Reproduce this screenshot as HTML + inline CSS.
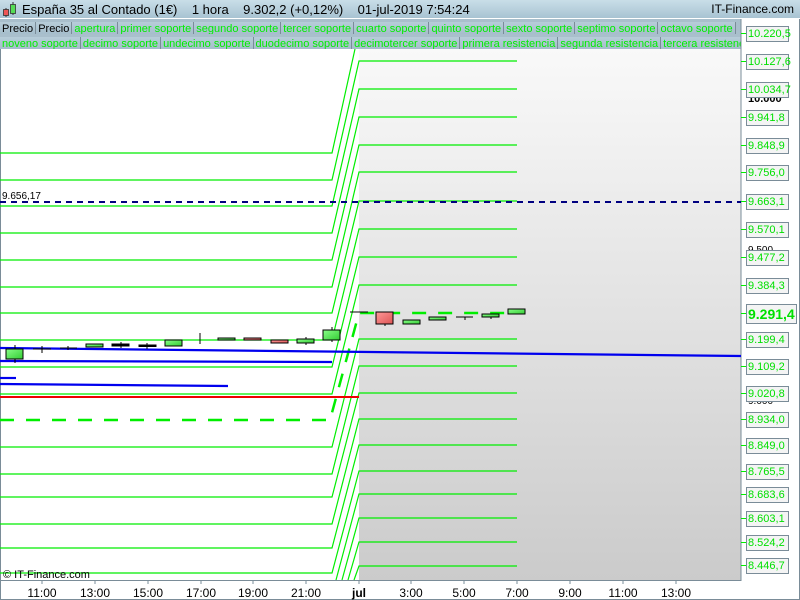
<!DOCTYPE html>
<html><head><meta charset="utf-8"><style>
body{margin:0;width:800px;height:600px;overflow:hidden;background:#fff;font-family:"Liberation Sans",sans-serif;}
.bar{position:absolute;left:0;width:800px;background:linear-gradient(#c9dee8,#a8c3d2);}
.row{position:absolute;left:0;height:15px;width:741px;background:#a9bfcc;overflow:hidden;white-space:nowrap}
.row span{display:inline-block;height:14px;line-height:14px;font-size:11px;color:#00ee00;padding:0 2px;border-right:1px solid #7a8c98;border-bottom:1px solid #7a8c98;background:linear-gradient(#b7cdd9,#a3bbc9)}
.row span.b{color:#000}
</style></head><body>
<div class="bar" style="top:0;height:18px;"></div>
<svg style="position:absolute;left:2px;top:1px" width="16" height="17"><line x1="4" y1="7" x2="4" y2="16" stroke="#333"/><rect x="1.5" y="8.5" width="5" height="6" fill="#e55" stroke="#333" stroke-width=".8"/><line x1="11" y1="1" x2="11" y2="14" stroke="#333"/><rect x="8.5" y="3.5" width="5" height="9" fill="#5d5" stroke="#333" stroke-width=".8"/></svg>
<div style="position:absolute;left:22px;top:2px;font-size:13px;color:#000;white-space:pre">España 35 al Contado (1€)    1 hora    9.302,2 (+0,12%)    01-jul-2019 7:54:24</div>
<div style="position:absolute;right:6px;top:2px;font-size:12px;color:#000">IT-Finance.com</div>
<div class="row" style="top:19px"><span class="b">Precio</span><span class="b">Precio</span><span>apertura</span><span>primer soporte</span><span>segundo soporte</span><span>tercer soporte</span><span>cuarto soporte</span><span>quinto soporte</span><span>sexto soporte</span><span>septimo soporte</span><span>octavo soporte</span></div>
<div class="row" style="top:34px;height:15px"><span>noveno soporte</span><span>decimo soporte</span><span>undecimo soporte</span><span>duodecimo soporte</span><span>decimotercer soporte</span><span>primera resistencia</span><span>segunda resistencia</span><span>tercera resistencia</span></div>
<div style="position:absolute;left:741px;top:19px;width:59px;height:30px;background:#fff"></div>
<svg style="position:absolute;left:0;top:0" width="800" height="600">
<defs><linearGradient id="g" x1="0" y1="0" x2="0" y2="1"><stop offset="0" stop-color="#f9f9f9"/><stop offset="1" stop-color="#cbcbcb"/></linearGradient>
<linearGradient id="cg" x1="0" y1="0" x2="1" y2="1"><stop offset="0" stop-color="#8f8"/><stop offset="1" stop-color="#3c3"/></linearGradient>
<linearGradient id="cr" x1="0" y1="0" x2="1" y2="1"><stop offset="0" stop-color="#f99"/><stop offset="1" stop-color="#d55"/></linearGradient></defs>
<rect x="359" y="49" width="382" height="531" fill="url(#g)"/>
<line x1="741" y1="19" x2="741" y2="581" stroke="#7a8c98"/>
<line x1="0" y1="580.5" x2="741" y2="580.5" stroke="#7a8c98"/>
<line x1="0.5" y1="49" x2="0.5" y2="600" stroke="#7a8c98"/>
<line x1="0" y1="599.5" x2="800" y2="599.5" stroke="#7a8c98"/>
<line x1="799.5" y1="19" x2="799.5" y2="600" stroke="#7a8c98"/>
<g fill="none" stroke="#00ee00" stroke-width="1.2">
<polyline points="0,153 332,153 355,49"/>
<polyline points="0,180 332,180 359,61 517,61"/>
<polyline points="0,206 332,206 359,89 517,89"/>
<polyline points="0,233 332,233 359,117 517,117"/>
<polyline points="0,260 332,260 359,145 517,145"/>
<polyline points="0,287 332,287 359,172 517,172"/>
<polyline points="0,313 332,313 359,201 517,201"/>
<polyline points="0,340 332,340 359,229 517,229"/>
<polyline points="0,367 332,367 359,257 517,257"/>
<polyline points="0,394 332,394 359,285 517,285"/>
<polyline points="0,447 332,447 359,339 517,339"/>
<polyline points="0,474 332,474 359,366 517,366"/>
<polyline points="0,497 332,497 359,393 517,393"/>
<polyline points="0,524 332,524 359,419 517,419"/>
<polyline points="0,548 332,548 359,445 517,445"/>
<polyline points="0,573 332,573 359,471 517,471"/>
<polyline points="336,580 359,494 517,494"/>
<polyline points="342,580 359,518 517,518"/>
<polyline points="348,580 359,542 517,542"/>
<polyline points="354,580 359,566 517,566"/>
</g>
<polyline points="0,420 330,420 359,313 517,313" fill="none" stroke="#00ee00" stroke-width="2.5" stroke-dasharray="14,12"/>
<line x1="0" y1="202" x2="741" y2="202" stroke="#000080" stroke-width="2" stroke-dasharray="6,5"/>
<text x="2" y="199" font-size="10" fill="#000">9.656,17</text>
<g stroke="#0000ee" stroke-width="2.2">
<line x1="0" y1="348" x2="741" y2="356"/>
<line x1="0" y1="361" x2="332" y2="362"/>
<line x1="0" y1="378" x2="16" y2="378"/>
<line x1="0" y1="384" x2="228" y2="386"/>
</g>
<line x1="0" y1="397" x2="359" y2="397" stroke="#ee0000" stroke-width="2"/>
<g stroke="#000" stroke-width="1">
<line x1="15" y1="345" x2="15" y2="363"/><rect x="6" y="349" width="17" height="10" fill="url(#cg)"/>
<line x1="42" y1="346" x2="42" y2="353"/><line x1="33" y1="349" x2="51" y2="349"/>
<line x1="68" y1="346" x2="68" y2="350"/><line x1="60" y1="348" x2="77" y2="348"/>
<rect x="86" y="344" width="17" height="3" fill="url(#cg)"/>
<line x1="121" y1="342" x2="121" y2="348"/><rect x="112" y="344" width="17" height="2"/>
<line x1="147" y1="343" x2="147" y2="349"/><rect x="139" y="345" width="17" height="1.5"/>
<rect x="165" y="340" width="17" height="6" fill="url(#cg)"/>
<line x1="200" y1="333" x2="200" y2="344"/>
<rect x="218" y="338" width="17" height="2" fill="url(#cg)"/>
<rect x="244" y="338" width="17" height="2" fill="url(#cr)"/>
<rect x="271" y="340" width="17" height="3" fill="url(#cr)"/>
<line x1="306" y1="337" x2="306" y2="345"/><rect x="297" y="339" width="17" height="4" fill="url(#cg)"/>
<line x1="332" y1="327" x2="332" y2="342"/><rect x="323" y="330" width="17" height="10" fill="url(#cg)"/>
<line x1="350" y1="312" x2="368" y2="312"/>
<line x1="385" y1="312" x2="385" y2="326"/><rect x="376" y="312" width="17" height="12" fill="url(#cr)"/>
<rect x="403" y="320" width="17" height="4" fill="url(#cg)"/>
<rect x="429" y="317" width="17" height="3" fill="url(#cg)"/>
<line x1="456" y1="317" x2="473" y2="317"/><line x1="465" y1="317" x2="465" y2="320"/>
<line x1="491" y1="315" x2="491" y2="319"/><rect x="482" y="314" width="17" height="3" fill="url(#cg)"/>
<rect x="508" y="309" width="17" height="5" fill="url(#cg)"/>
</g>
<g font-size="12" fill="#000" text-anchor="middle">
<text x="42" y="597">11:00</text>
<text x="95" y="597">13:00</text><text x="148" y="597">15:00</text><text x="201" y="597">17:00</text>
<text x="253" y="597">19:00</text><text x="306" y="597">21:00</text><text x="359" y="597" font-weight="bold">jul</text>
<text x="411" y="597">3:00</text><text x="464" y="597">5:00</text><text x="517" y="597">7:00</text>
<text x="570" y="597">9:00</text><text x="623" y="597">11:00</text><text x="676" y="597">13:00</text>
</g>
<g stroke="#7a8c98"><line x1="42" y1="581" x2="42" y2="584"/><line x1="95" y1="581" x2="95" y2="584"/><line x1="148" y1="581" x2="148" y2="584"/><line x1="201" y1="581" x2="201" y2="584"/><line x1="253" y1="581" x2="253" y2="584"/><line x1="306" y1="581" x2="306" y2="584"/><line x1="359" y1="581" x2="359" y2="584"/><line x1="411" y1="581" x2="411" y2="584"/><line x1="464" y1="581" x2="464" y2="584"/><line x1="517" y1="581" x2="517" y2="584"/><line x1="570" y1="581" x2="570" y2="584"/><line x1="623" y1="581" x2="623" y2="584"/><line x1="676" y1="581" x2="676" y2="584"/></g>
<text x="3" y="578" font-size="11" fill="#000">© IT-Finance.com</text>
<text x="748" y="102" font-size="11" font-weight="bold" fill="#000">10.000</text>
<text x="748" y="253" font-size="10" fill="#000">9.500</text>
<text x="748" y="404" font-size="10" fill="#000">9.000</text>
</svg>
<div style="position:absolute;left:0;top:0">
<style>.l{position:absolute;left:746px;width:40px;height:14px;border:1px solid #7a8c98;background:#f4f4f4;color:#00e000;font-size:11px;line-height:14px;padding-left:1px}.t{position:absolute;left:741px;width:5px;height:1px;background:#00ee00}</style>
<div class="l" style="top:26px">10.220,5</div><div class="t" style="top:33px"></div>
<div class="l" style="top:54px">10.127,6</div><div class="t" style="top:61px"></div>
<div class="l" style="top:82px">10.034,7</div><div class="t" style="top:89px"></div>
<div class="l" style="top:110px">9.941,8</div><div class="t" style="top:117px"></div>
<div class="l" style="top:138px">9.848,9</div><div class="t" style="top:145px"></div>
<div class="l" style="top:165px">9.756,0</div><div class="t" style="top:172px"></div>
<div class="l" style="top:194px">9.663,1</div><div class="t" style="top:201px"></div>
<div class="l" style="top:222px">9.570,1</div><div class="t" style="top:229px"></div>
<div class="l" style="top:250px">9.477,2</div><div class="t" style="top:257px"></div>
<div class="l" style="top:278px">9.384,3</div><div class="t" style="top:285px"></div>
<div class="l" style="top:304px;width:48px;height:18px;font-size:14px;font-weight:bold;line-height:18px">9.291,4</div><div class="t" style="top:313px"></div>
<div class="l" style="top:332px">9.199,4</div><div class="t" style="top:339px"></div>
<div class="l" style="top:359px">9.109,2</div><div class="t" style="top:366px"></div>
<div class="l" style="top:386px">9.020,8</div><div class="t" style="top:393px"></div>
<div class="l" style="top:412px">8.934,0</div><div class="t" style="top:419px"></div>
<div class="l" style="top:438px">8.849,0</div><div class="t" style="top:445px"></div>
<div class="l" style="top:464px">8.765,5</div><div class="t" style="top:471px"></div>
<div class="l" style="top:487px">8.683,6</div><div class="t" style="top:494px"></div>
<div class="l" style="top:511px">8.603,1</div><div class="t" style="top:518px"></div>
<div class="l" style="top:535px">8.524,2</div><div class="t" style="top:542px"></div>
<div class="l" style="top:558px">8.446,7</div><div class="t" style="top:565px"></div>
</div>
</body></html>
